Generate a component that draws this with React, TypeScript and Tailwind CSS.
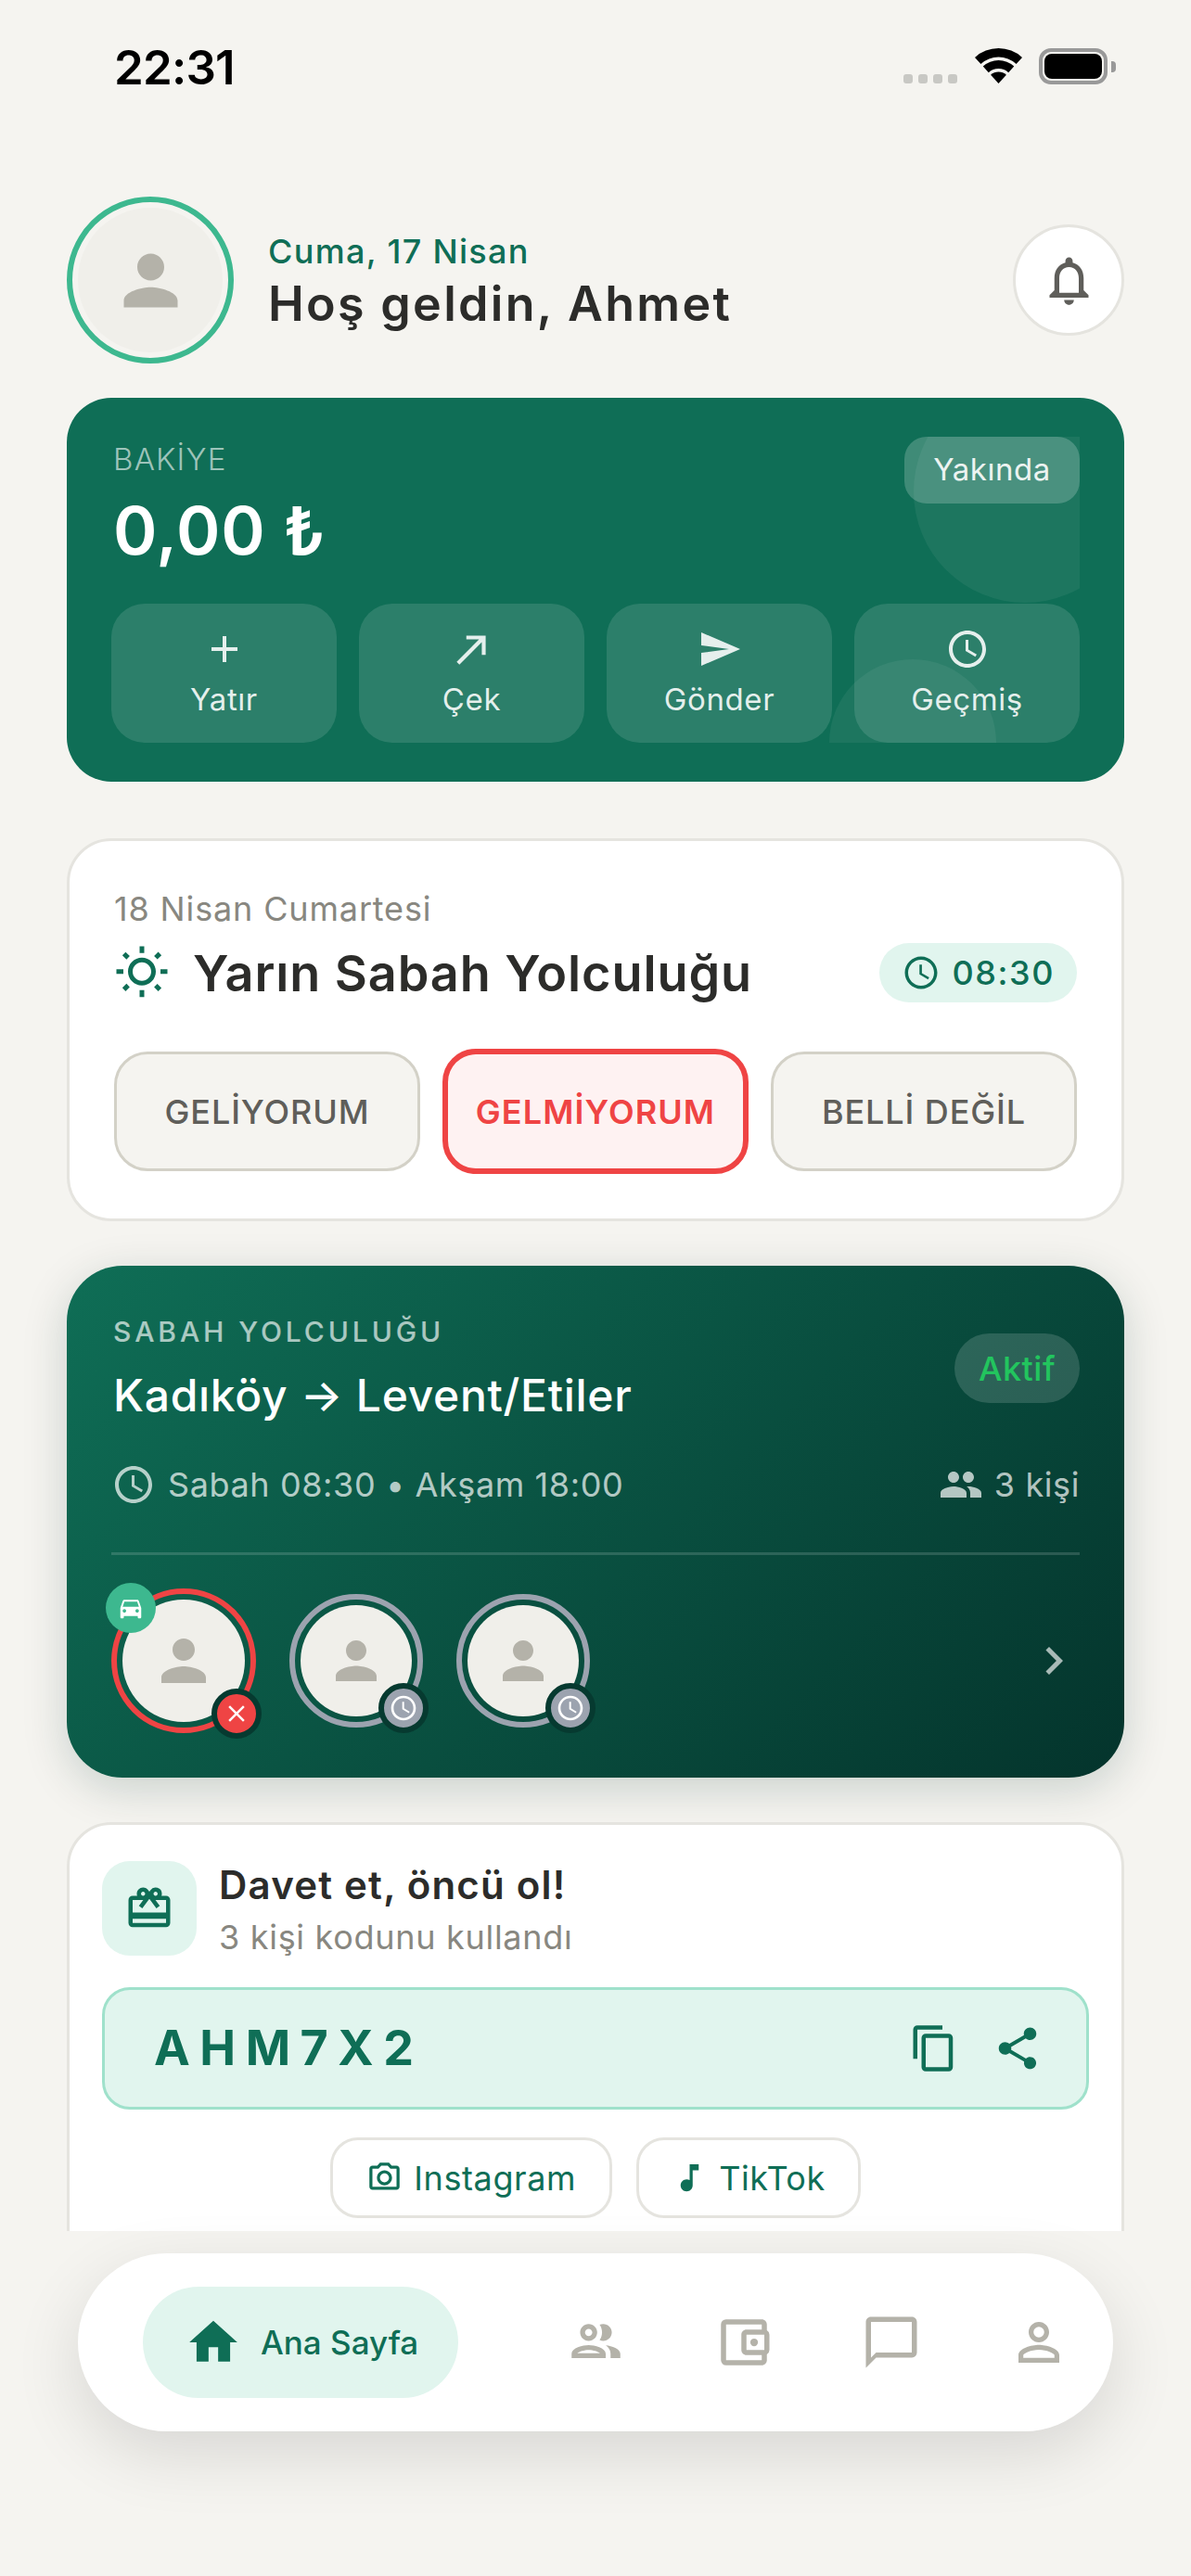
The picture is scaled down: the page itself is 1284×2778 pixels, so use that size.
import React from "react";
import {
  MdAccessTime,
  MdAdd,
  MdChatBubbleOutline,
  MdChevronRight,
  MdClose,
  MdContentCopy,
  MdDirectionsCar,
  MdHome,
  MdMusicNote,
  MdNorthEast,
  MdOutlineAccountBalanceWallet,
  MdOutlineCameraAlt,
  MdOutlineCardGiftcard,
  MdOutlineNotifications,
  MdOutlinePeople,
  MdOutlineWbSunny,
  MdPeople,
  MdPerson,
  MdPersonOutline,
  MdSend,
  MdShare,
} from "react-icons/md";

const actions = [
  { label: "Yatır", icon: <MdAdd size={48} /> },
  { label: "Çek", icon: <MdNorthEast size={50} /> },
  { label: "Gönder", icon: <MdSend size={48} /> },
  { label: "Geçmiş", icon: <MdAccessTime size={48} /> },
];

const WifiGlyph: React.FC = () => (
  <svg width="51" height="38" viewBox="0 0 51 38" fill="black">
    <path d="M0 9.9A38 38 0 0 1 51 9.9L44.6 16.9A28.5 28.5 0 0 0 6.4 16.9Z" />
    <path d="M8.75 19.5A25 25 0 0 1 42.25 19.5L36.2 26.2A16 16 0 0 0 14.8 26.2Z" />
    <path d="M17.1 28.75A12.5 12.5 0 0 1 33.9 28.75L25.5 38Z" />
  </svg>
);

const StatusBar: React.FC = () => (
  <div className="flex h-[141px] items-start justify-between pl-[123px] pr-[81px] pt-[50px]">
    <span className="text-[51px] leading-[45px] font-semibold tracking-[-0.8px] text-black">22:31</span>
    <div className="mt-[2px] flex items-end">
      <div className="mb-[1px] flex gap-[6px]">
        <span className="h-[10px] w-[10px] rounded-[3px] bg-[#c8c8c4]" />
        <span className="h-[10px] w-[10px] rounded-[3px] bg-[#c8c8c4]" />
        <span className="h-[10px] w-[10px] rounded-[3px] bg-[#c8c8c4]" />
        <span className="h-[10px] w-[10px] rounded-[3px] bg-[#c8c8c4]" />
      </div>
      <div className="ml-[19px] mb-[1px]">
        <WifiGlyph />
      </div>
      <div className="ml-[18px] flex items-center">
        <div className="h-[39px] w-[74px] rounded-[13px] border-[4px] border-[#999] p-[2px]">
          <div className="h-full w-full rounded-[8px] bg-black" />
        </div>
        <div className="ml-[4px] h-[12px] w-[5px] rounded-r-[4px] bg-[#999]" />
      </div>
    </div>
  </div>
);

const Header: React.FC = () => (
  <div className="mt-[71px] flex items-center">
    <div className="flex h-[180px] w-[180px] items-center justify-center rounded-full border-[6px] border-[#3db88f] bg-[#f5f4f0]">
      <div className="flex h-[156px] w-[156px] items-center justify-center rounded-full bg-[#f0efea]">
        <MdPerson size={87} className="text-[#b4b2a9]" />
      </div>
    </div>
    <div className="ml-[37px] flex-1 pt-[4px]">
      <p className="text-[36px] leading-[48px] font-medium tracking-[1.3px] text-[#0f6e56]">Cuma, 17 Nisan</p>
      <p className="text-[52px] leading-[66px] font-semibold tracking-[2.3px] text-[#2c2c2a]">Hoş geldin, Ahmet</p>
    </div>
    <button className="flex h-[120px] w-[120px] items-center justify-center rounded-full border-[3px] border-[#e5e4df] bg-white">
      <MdOutlineNotifications size={63} className="text-[#5f5e5a]" />
    </button>
  </div>
);

const BalanceCard: React.FC = () => (
  <div className="mt-[37px] rounded-[48px] bg-[#0f6e56] px-[48px] py-[42px]">
    <div className="relative overflow-hidden">
      <div className="absolute left-[865px] top-[-61px] h-[240px] w-[240px] rounded-full bg-white/6" />
      <div className="absolute left-[774px] top-[240px] h-[180px] w-[180px] rounded-full bg-white/6" />
      <div className="flex h-[180px] items-start justify-between">
        <div className="pl-[2px]">
          <p className="mt-[3px] text-[33px] leading-[42px] font-light tracking-[1.2px] text-white/60">BAKİYE</p>
          <p className="mt-[11px] text-[72px] leading-[90px] font-semibold tracking-[0.8px] text-white">0,00 ₺</p>
        </div>
        <span className="flex h-[72px] w-[189px] items-center justify-center rounded-[24px] bg-white/20 text-[33px] tracking-[0.5px] text-white/90">
          Yakında
        </span>
      </div>
      <div className="grid grid-cols-4 gap-[24px]">
        {actions.map((a) => (
          <button key={a.label} className="flex h-[150px] flex-col items-center rounded-[36px] bg-white/12 pt-[25px] text-white/88">
            <span className="flex h-[48px] items-center">{a.icon}</span>
            <span className="mt-[9px] text-[33px] leading-[42px] tracking-[0.6px]">{a.label}</span>
          </button>
        ))}
      </div>
    </div>
  </div>
);

const TomorrowCard: React.FC = () => (
  <div className="mt-[61px] rounded-[48px] border-[3px] border-[#e5e4df] bg-white p-[48px]">
    <p className="text-[36px] leading-[50px] tracking-[0.85px] text-[#888780]">18 Nisan Cumartesi</p>
    <div className="mt-[11px] flex h-[66px] items-center">
      <MdOutlineWbSunny size={60} className="text-[#0f6e56]" />
      <span className="ml-[25px] flex-1 text-[54px] font-semibold tracking-[0.9px] text-[#2c2c2a]">Yarın Sabah Yolculuğu</span>
      <span className="flex h-[64px] items-center gap-[12px] rounded-full bg-[#e1f5ee] px-[24px] text-[36px] font-medium tracking-[1.6px] text-[#0f6e56]">
        <MdAccessTime size={42} />
        08:30
      </span>
    </div>
    <div className="mt-[49px] grid grid-cols-3 items-center gap-[24px]">
      <button className="h-[129px] rounded-[36px] border-[3px] border-[#d3d1c7] bg-[#f5f4f0] text-[36px] font-medium tracking-[0.9px] text-[#5f5e5a]">
        GELİYORUM
      </button>
      <button className="h-[135px] rounded-[36px] border-[6px] border-[#ef4444] bg-[#fef2f2] text-[36px] font-semibold tracking-[1.1px] text-[#ef4444]">
        GELMİYORUM
      </button>
      <button className="h-[129px] rounded-[36px] border-[3px] border-[#d3d1c7] bg-[#f5f4f0] text-[36px] font-medium tracking-[0.9px] text-[#5f5e5a]">
        BELLİ DEĞİL
      </button>
    </div>
  </div>
);

const RiderLarge: React.FC = () => (
  <div className="relative flex h-[156px] w-[156px] items-center justify-center rounded-full border-[6px] border-[#ef4444]">
    <div className="flex h-[132px] w-[132px] items-center justify-center rounded-full bg-[#f0efea]">
      <MdPerson size={72} className="text-[#b4b2a9]" />
    </div>
    <span className="absolute left-[-12px] top-[-12px] flex h-[54px] w-[54px] items-center justify-center rounded-full bg-[#3db88f] text-white">
      <MdDirectionsCar size={30} />
    </span>
    <span className="absolute left-[102px] top-[102px] flex h-[54px] w-[54px] items-center justify-center rounded-full border-[6px] border-[#063a30] bg-[#ef4444] text-white">
      <MdClose size={30} />
    </span>
  </div>
);

const RiderSmall: React.FC = () => (
  <div className="relative flex h-[144px] w-[144px] items-center justify-center rounded-full border-[6px] border-[#9ca3af]">
    <div className="flex h-[120px] w-[120px] items-center justify-center rounded-full bg-[#f0efea]">
      <MdPerson size={66} className="text-[#b4b2a9]" />
    </div>
    <span className="absolute left-[90px] top-[90px] flex h-[54px] w-[54px] items-center justify-center rounded-full border-[6px] border-[#063a30] bg-[#9ca3af] text-white">
      <MdAccessTime size={32} />
    </span>
  </div>
);

const TripCard: React.FC = () => (
  <div className="mt-[48px] rounded-[60px] bg-[linear-gradient(135deg,#0f6e56,#04342c)] p-[48px] shadow-[0_12px_48px_rgba(4,52,44,0.18)]">
    <div className="flex items-center justify-between">
      <div className="pl-[2px]">
        <p className="text-[30px] leading-[46px] font-medium tracking-[3.9px] text-white/65">SABAH YOLCULUĞU</p>
        <p className="mt-[14px] text-[48px] leading-[63px] font-medium tracking-[0.7px] text-white">Kadıköy → Levent/Etiler</p>
      </div>
      <span className="mt-[2px] flex h-[75px] w-[135px] items-center justify-center rounded-full bg-white/15 text-[36px] font-medium tracking-[0.5px] text-[#22c55e]">
        Aktif
      </span>
    </div>
    <div className="mt-[38px] flex h-[54px] items-center justify-between text-[36px] tracking-[0.6px] text-white/70">
      <span className="flex items-center gap-[13px]">
        <MdAccessTime size={48} />
        Sabah 08:30 • Akşam 18:00
      </span>
      <span className="flex items-center gap-[12px]">
        <MdPeople size={48} />3 kişi
      </span>
    </div>
    <div className="mt-[46px] h-[3px] bg-white/15" />
    <div className="mt-[36px] flex items-center gap-[36px]">
      <RiderLarge />
      <RiderSmall />
      <RiderSmall />
      <MdChevronRight size={60} className="ml-auto -mr-[2px] text-white/65" />
    </div>
  </div>
);

const InviteCard: React.FC = () => (
  <div className="mt-[48px] rounded-[48px] border-[3px] border-[#e5e4df] bg-white px-[35px] pb-[60px] pt-[39px]">
    <div className="flex h-[102px] items-start">
      <div className="flex h-[102px] w-[102px] items-center justify-center rounded-[30px] bg-[#e1f5ee] text-[#0f6e56]">
        <MdOutlineCardGiftcard size={54} />
      </div>
      <div className="ml-[24px]">
        <p className="text-[42px] leading-[52px] font-semibold tracking-[1.2px] text-[#2c2c2a]">Davet et, öncü ol!</p>
        <p className="mt-[6px] text-[36px] leading-[48px] tracking-[0.7px] text-[#888780]">3 kişi kodunu kullandı</p>
      </div>
    </div>
    <div className="mt-[34px] flex h-[132px] items-center rounded-[30px] border-[3px] border-[#9fe1cb] bg-[#e1f5ee] pl-[53px] pr-[47px] text-[#0f6e56]">
      <span className="flex-1 text-[52px] font-bold tracking-[10.5px]">AHM7X2</span>
      <MdContentCopy size={54} />
      <MdShare size={54} className="ml-[36px]" />
    </div>
    <div className="mt-[30px] flex justify-center gap-[26px]">
      <button className="flex h-[87px] items-center gap-[12px] rounded-[30px] border-[3px] border-[#e5e4df] px-[36px] text-[36px] tracking-[0.6px] text-[#0f6e56]">
        <MdOutlineCameraAlt size={39} />
        Instagram
      </button>
      <button className="flex h-[87px] items-center gap-[12px] rounded-[30px] border-[3px] border-[#e5e4df] px-[35px] text-[36px] tracking-[0.5px] text-[#0f6e56]">
        <MdMusicNote size={39} />
        TikTok
      </button>
    </div>
  </div>
);

const BottomNav: React.FC = () => (
  <div className="relative mx-[84px] mt-[24px] flex h-[192px] items-center rounded-full bg-white pl-[70px] shadow-[0_24px_72px_rgba(0,0,0,0.12)]">
    <div className="flex h-[120px] w-[340px] items-center gap-[20px] rounded-full bg-[#e1f5ee] pl-[45px] text-[#0f6e56]">
      <MdHome size={62} />
      <span className="text-[35px] font-medium">Ana Sayfa</span>
    </div>
    <div className="ml-[69px] flex text-[#b4b2a9]">
      <span className="flex w-[159px] justify-center"><MdOutlinePeople size={63} /></span>
      <span className="flex w-[159px] justify-center"><MdOutlineAccountBalanceWallet size={66} /></span>
      <span className="flex w-[159px] justify-center"><MdChatBubbleOutline size={66} /></span>
      <span className="flex w-[159px] justify-center"><MdPersonOutline size={66} /></span>
    </div>
  </div>
);

const App: React.FC = () => {
  return (
    <div className="h-[2778px] w-[1284px] overflow-hidden bg-[#f5f4f0] font-['Inter',sans-serif]">
      <StatusBar />
      <div className="h-[2265px] overflow-hidden px-[72px]">
        <Header />
        <BalanceCard />
        <TomorrowCard />
        <TripCard />
        <InviteCard />
      </div>
      <BottomNav />
    </div>
  );
};

export default App;
